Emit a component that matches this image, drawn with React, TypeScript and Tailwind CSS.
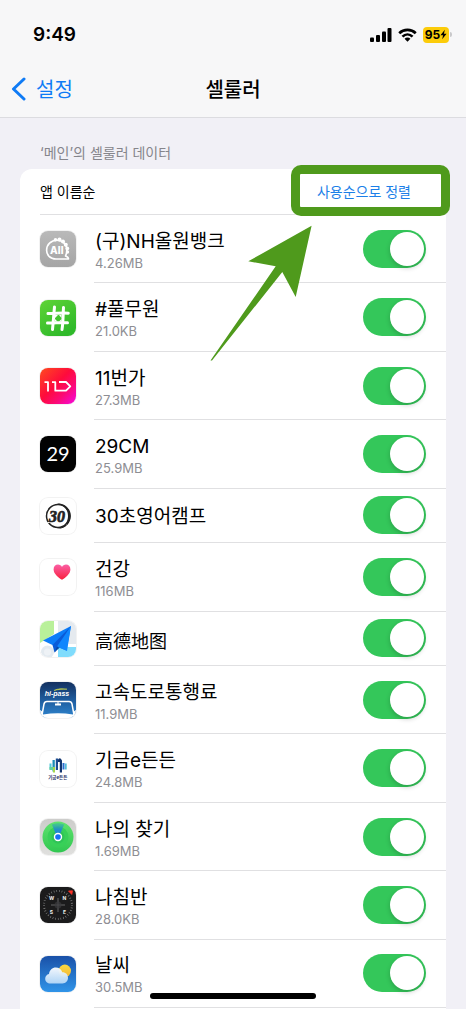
import type { ReactNode } from "react";
import { clsx } from "clsx";

type AppItem = {
  name: string;
  usage?: string;
  lang?: string;
  icon: ReactNode;
};

const AllOneIcon = () => (
  <svg viewBox="0 0 36 36" className="h-full w-full">
    <defs>
      <linearGradient id="allone" x1="0" y1="0" x2="0" y2="1">
        <stop offset="0" stopColor="#b9b9b9" />
        <stop offset="1" stopColor="#a5a5a5" />
      </linearGradient>
    </defs>
    <rect width="36" height="36" fill="url(#allone)" />
    <path
      d="M28.500 28H16C10 28 6.600 24 6.600 19.200C6.600 13.500 11 9.300 17 9.300C23 9.300 26.800 13.500 26.800 19C26.800 21.500 26.500 23.500 25.500 25C27 25.500 28.500 26.500 28.500 28Z"
      fill="none"
      stroke="#fff"
      strokeWidth="1.600"
      strokeLinejoin="round"
    />
    <g fill="#fff">
      <circle cx="15.500" cy="8.800" r="1.800" />
      <circle cx="19.500" cy="8.600" r="2" />
      <circle cx="23" cy="10.600" r="2" />
      <circle cx="25.800" cy="13.800" r="2" />
      <circle cx="27.300" cy="17.500" r="1.900" />
      <circle cx="27.500" cy="21" r="1.700" />
    </g>
    <text x="16.800" y="23" textAnchor="middle" fill="#fff" fontSize="10" fontWeight="800" fontFamily="Inter, sans-serif">
      All
    </text>
  </svg>
);

const HashIcon = () => (
  <svg viewBox="0 0 36 36" className="h-full w-full">
    <defs>
      <linearGradient id="hash" x1="0" y1="0" x2="0.6" y2="1">
        <stop offset="0" stopColor="#5fd436" />
        <stop offset="1" stopColor="#2fb92a" />
      </linearGradient>
    </defs>
    <rect width="36" height="36" fill="url(#hash)" />
    <g fill="none" stroke="#fff" strokeWidth="3" strokeLinecap="round" strokeLinejoin="round">
      <path d="M14.500 7C13.700 15 13.400 21 12.500 29.500" />
      <path d="M23.500 7.500C23 14 23.300 22 22 29.500" />
      <path d="M8 13.500C15 13.800 21 12.500 28.300 13.200" />
      <path d="M7.500 23C14 23.300 21 22.300 27.500 22.800" />
    </g>
    <path d="M15 15H18L15 18ZM21.500 15V18L19 15ZM15 21.500H17.500L15 19ZM21.500 21.500V19L19 21.500Z" fill="#fff" />
  </svg>
);

const ElevenIcon = () => (
  <svg viewBox="0 0 36 36" className="h-full w-full">
    <defs>
      <linearGradient id="eleven" x1="0" y1="0" x2="1" y2="1">
        <stop offset="0" stopColor="#ff4b1f" />
        <stop offset="0.45" stopColor="#fe0b3c" />
        <stop offset="0.7" stopColor="#fb0a76" />
        <stop offset="1" stopColor="#f509e0" />
      </linearGradient>
    </defs>
    <rect width="36" height="36" fill="url(#eleven)" />
    <path
      d="M4.500 14.200H8V23.500M12 14.200H15.300V22.700H26L30.300 18.400L26 14H19"
      fill="none"
      stroke="#fff"
      strokeWidth="1.800"
      strokeLinejoin="round"
    />
  </svg>
);

const TwentyNineIcon = () => (
  <svg viewBox="0 0 36 36" className="h-full w-full">
    <rect width="36" height="36" fill="#020202" />
    <text x="18" y="25" textAnchor="middle" fill="#fff" fontSize="20" fontFamily="Lato, Inter, sans-serif">
      29
    </text>
  </svg>
);

const ThirtyIcon = () => (
  <svg viewBox="0 0 36 36" className="h-full w-full">
    <circle cx="18" cy="18" r="11.500" fill="none" stroke="#222" strokeWidth="1.500" />
    <path d="M17 5.500C25 5 30.900 11 30.900 18C30.900 25 25 31.500 17 30.800C24 29.500 28 24.500 28 18C28 11.500 24 7 17 5.500Z" fill="#222" />
    <path d="M6 25.500L10 24M26.500 27L29 29" stroke="#fff" strokeWidth="1" fill="none" />
    <text
      x="17"
      y="23.500"
      textAnchor="middle"
      fill="#222"
      stroke="#222"
      strokeWidth="0.700"
      fontSize="16"
      fontStyle="italic"
      fontWeight="700"
      fontFamily="'Liberation Serif', serif"
    >
      30
    </text>
  </svg>
);

const HealthIcon = () => (
  <svg viewBox="0 0 36 36" className="h-full w-full">
    <defs>
      <linearGradient id="heart" x1="0" y1="0" x2="0" y2="1">
        <stop offset="0" stopColor="#fb5fa5" />
        <stop offset="1" stopColor="#f8203c" />
      </linearGradient>
    </defs>
    <path
      d="M22 20.800C18.500 18.500 13.600 14.800 13.600 10.400C13.600 7.500 15.500 5.600 18 5.600C19.800 5.600 21.200 6.500 22 7.900C22.800 6.500 24.300 5.600 26 5.600C28.500 5.600 30.400 7.500 30.400 10.400C30.400 14.800 25.500 18.500 22 20.800Z"
      fill="url(#heart)"
    />
  </svg>
);

const AmapIcon = () => (
  <svg viewBox="0 0 36 36" className="h-full w-full">
    <rect width="36" height="36" fill="#fff" />
    <path d="M0 0H14V13L0 22Z" fill="#b9f09a" />
    <path d="M18 0H36V23H18Z" fill="#e5eaef" />
    <path d="M18 26H36V36H18Z" fill="#80dcfc" />
    <circle cx="7.500" cy="31" r="6.500" fill="#e3eaf0" />
    <circle cx="7.500" cy="31" r="3.500" fill="#eef2f6" />
    <path d="M31 5L3 19.500L12.500 24L26.500 29.500Z" fill="#0c7df8" />
    <path d="M31 5L12.500 24L14.500 31.500L18.500 26Z" fill="#0a5bd8" />
    <path d="M31 5L17 25.500L27 30Z" fill="#0f86fd" />
    <path d="M14.500 31.500L17 25.500L19.500 26.700Z" fill="#0747a8" />
  </svg>
);

const HipassIcon = () => (
  <svg viewBox="0 0 36 36" className="h-full w-full">
    <defs>
      <linearGradient id="hipass" x1="0" y1="0" x2="0" y2="1">
        <stop offset="0" stopColor="#14305f" />
        <stop offset="0.5" stopColor="#1e5c9e" />
        <stop offset="1" stopColor="#2f86d0" />
      </linearGradient>
    </defs>
    <rect width="36" height="36" fill="url(#hipass)" />
    <path d="M14 8.500C18 6.300 23 6.500 27 7.200C22 7 18 7.500 14 8.500Z" fill="#d6e04a" stroke="#d6e04a" strokeWidth="0.500" />
    <text
      x="17"
      y="13.800"
      textAnchor="middle"
      fill="#fff"
      fontSize="7"
      fontStyle="italic"
      fontWeight="700"
      fontFamily="'Liberation Sans', sans-serif"
    >
      hi-pass
    </text>
    <path d="M7 19.500H29Q31.500 19.500 32 22L34 33V36H2V33L4 22Q4.500 19.500 7 19.500Z" fill="none" stroke="#fff" strokeWidth="1.500" />
    <path d="M3 32.500Q18 30 33 32.500L34 36H2Z" fill="#fff" />
    <path d="M0 28L3 30V36H0ZM36 28L33 30V36H36Z" fill="#fff" />
    <path d="M15 21.500H21V23.500H15Z" fill="#fff" />
    <path d="M17.500 19.500H18.500V22H17.500Z" fill="#fff" />
  </svg>
);

const FundIcon = () => (
  <svg viewBox="0 0 36 36" className="h-full w-full">
    <path d="M9.500 12.500H11.500V18.500H9.500Z" fill="#52c8da" />
    <path d="M12.500 9H14.800V20.500H12.500Z" fill="#1c8fb8" />
    <path d="M9.500 16H15V19H9.500Z" fill="#62cf9f" />
    <path d="M13 16H15V21.500H13Z" fill="#a3d84e" />
    <path d="M15.800 7.500H18V19H15.800Z" fill="#1b4d92" />
    <path d="M17.500 9.500Q19.700 5 22 9.500V21.500H19.800V11H18V9.500Z" fill="#12356f" />
    <path d="M22.500 12H24.500V18.500H22.500Z" fill="#2a6fd0" />
    <path d="M25 12.500H26.700V18.500H25Z" fill="#55bdd8" />
    <text
      x="17.800"
      y="27.600"
      textAnchor="middle"
      fill="#1c2f63"
      fontSize="4.500"
      fontWeight="700"
      fontFamily="'Noto Sans CJK KR', sans-serif"
    >
      기금e든든
    </text>
  </svg>
);

const FindIcon = () => (
  <svg viewBox="0 0 36 36" className="h-full w-full">
    <defs>
      <linearGradient id="findbg" x1="0" y1="0" x2="0" y2="1">
        <stop offset="0" stopColor="#cdcdcb" />
        <stop offset="1" stopColor="#e0e0de" />
      </linearGradient>
      <linearGradient id="findring" x1="0" y1="0" x2="0" y2="1">
        <stop offset="0" stopColor="#5fe36e" />
        <stop offset="1" stopColor="#30c751" />
      </linearGradient>
      <linearGradient id="findbeam" x1="0" y1="0" x2="0" y2="1">
        <stop offset="0" stopColor="#35b8a0" stopOpacity="0.500" />
        <stop offset="0.400" stopColor="#2390c8" />
        <stop offset="1" stopColor="#1c7be0" />
      </linearGradient>
    </defs>
    <rect width="36" height="36" fill="url(#findbg)" />
    <circle cx="18" cy="18" r="15.500" fill="url(#findring)" />
    <circle cx="18" cy="18" r="10.500" fill="#38d058" />
    <circle cx="18" cy="18" r="6.500" fill="#2fc457" />
    <path d="M18 20L11.800 5.500Q18 2.500 24.200 5.500Z" fill="url(#findbeam)" />
    <circle cx="18" cy="18" r="4.200" fill="#fff" />
    <circle cx="18" cy="18" r="2.800" fill="#1671f5" />
  </svg>
);

const CompassIcon = () => (
  <svg viewBox="0 0 36 36" className="h-full w-full">
    <rect width="36" height="36" fill="#1b1b1c" />
    <circle cx="18" cy="18" r="14" fill="none" stroke="#8b8b8b" strokeWidth="2" strokeDasharray="0.600 2.065" />
    <path d="M18 11V25M11 18H25" stroke="#77777a" strokeWidth="0.800" />
    <circle cx="18" cy="18" r="3.500" fill="#3b3b3d" opacity="0.700" />
    <path d="M28.500 4L32.500 3.800L31.800 7.500Z" fill="#fc3227" stroke="#fc3227" strokeWidth="0.800" />
    <g fill="#f1f1f1" fontSize="5" fontWeight="700" fontFamily="Inter, sans-serif" textAnchor="middle">
      <text x="11.500" y="13.300">W</text>
      <text x="24.500" y="13.300">N</text>
      <text x="11.500" y="27">S</text>
      <text x="24.500" y="27">E</text>
    </g>
  </svg>
);

const WeatherIcon = () => (
  <svg viewBox="0 0 36 36" className="h-full w-full">
    <defs>
      <linearGradient id="sky" x1="0" y1="0" x2="0" y2="1">
        <stop offset="0" stopColor="#1a51a8" />
        <stop offset="1" stopColor="#3094e8" />
      </linearGradient>
      <linearGradient id="sun" x1="0" y1="0" x2="0" y2="1">
        <stop offset="0" stopColor="#fbd83d" />
        <stop offset="1" stopColor="#f3b93c" />
      </linearGradient>
      <linearGradient id="cloud" x1="0" y1="0" x2="0" y2="1">
        <stop offset="0" stopColor="#fafcff" />
        <stop offset="1" stopColor="#b5d8f7" />
      </linearGradient>
    </defs>
    <rect width="36" height="36" fill="url(#sky)" />
    <circle cx="24.800" cy="14.800" r="6.200" fill="url(#sun)" />
    <path
      d="M10.500 27.500C7.500 27.500 5.200 25.400 5.200 22.700C5.200 20.300 6.800 18.500 9 18C9.500 14.200 12.300 11.600 15.800 11.600C18.900 11.600 21.300 13.300 22.300 16.200C25.800 16.200 28 18.600 28 21.800C28 25 25.700 27.500 22.500 27.500Z"
      fill="url(#cloud)"
      opacity="0.960"
    />
  </svg>
);

const apps: AppItem[] = [
  { name: "(구)NH올원뱅크", usage: "4.26MB", icon: <AllOneIcon /> },
  { name: "#풀무원", usage: "21.0KB", icon: <HashIcon /> },
  { name: "11번가", usage: "27.3MB", icon: <ElevenIcon /> },
  { name: "29CM", usage: "25.9MB", icon: <TwentyNineIcon /> },
  { name: "30초영어캠프", icon: <ThirtyIcon /> },
  { name: "건강", usage: "116MB", icon: <HealthIcon /> },
  { name: "高德地图", lang: "zh", icon: <AmapIcon /> },
  { name: "고속도로통행료", usage: "11.9MB", icon: <HipassIcon /> },
  { name: "기금e든든", usage: "24.8MB", icon: <FundIcon /> },
  { name: "나의 찾기", usage: "1.69MB", icon: <FindIcon /> },
  { name: "나침반", usage: "28.0KB", icon: <CompassIcon /> },
  { name: "날씨", usage: "30.5MB", icon: <WeatherIcon /> },
];

function StatusBar() {
  return (
    <div className="flex h-[61px] items-center justify-between pt-2 pr-[14px] pl-[33px]">
      <span className="text-[19px] leading-6 font-semibold">9:49</span>
      <div className="flex items-center gap-[6px]">
        <svg viewBox="0 0 22 14" className="h-[14px] w-[22px]">
          <rect x="0" y="9.500" width="4" height="4.500" rx="1" />
          <rect x="6" y="7" width="4" height="7" rx="1" />
          <rect x="12" y="3.500" width="4" height="10.500" rx="1" />
          <rect x="17.500" y="0" width="4" height="14" rx="1" />
        </svg>
        <svg viewBox="0 0 20 14" className="h-[14px] w-[19px]">
          <g fill="none" stroke="#000" strokeWidth="2.800">
            <path d="M1.300 5.200C6 0.500 14 0.500 18.700 5.200" />
            <path d="M4.700 8.700C7.800 5.700 12.200 5.700 15.300 8.700" />
          </g>
          <path d="M10 14L6.900 10.900C8.600 9.300 11.400 9.300 13.100 10.900Z" />
        </svg>
        <div className="flex items-center gap-px">
          <span className="flex h-4 w-[26px] items-center justify-center rounded-[4px] bg-[#fccc0a] text-[12px] leading-4 font-bold">
            95
            <svg viewBox="0 0 8 11" className="h-[11px] w-[7px]">
              <path d="M5.500 0L0.500 6.300H3.500L2.500 11L7.500 4.700H4.500Z" />
            </svg>
          </span>
          <span className="h-[5px] w-[2px] rounded-r-full bg-[#c9c9cb]" />
        </div>
      </div>
    </div>
  );
}

function AppRow({ app }: { app: AppItem }) {
  return (
    <li className={clsx("flex shrink-0 grow items-center pl-5", app.usage ? "basis-[68px]" : "basis-[54px]")}>
      <div className="h-9 w-9 shrink-0 overflow-hidden rounded-[8px] ring-1 ring-black/5">{app.icon}</div>
      <div className="ml-[18px] flex flex-1 items-center justify-between self-stretch border-b border-[#e0e0e2] pr-5">
        <div className={clsx("pl-px", !app.usage && "pt-1")}>
          <div
            lang={app.lang}
            className={clsx(
              app.lang === "zh"
                ? "font-['Noto_Sans_CJK_SC',sans-serif] text-[18px] leading-6"
                : "text-[19px] leading-7"
            )}
          >
            {app.name}
          </div>
          {app.usage && <div className="text-[13px] leading-[14px] text-[#8e8e93]">{app.usage}</div>}
        </div>
        <input
          type="checkbox"
          role="switch"
          defaultChecked
          aria-label={app.name}
          className="h-[38px] w-[63px] shrink-0 cursor-pointer appearance-none rounded-full bg-[#e9e9eb] p-[2px] transition-colors before:block before:h-[34px] before:w-[34px] before:rounded-full before:bg-white before:shadow-[0_2px_5px_rgba(0,0,0,0.2)] before:transition-transform checked:bg-[#34c75a] checked:before:translate-x-[25px]"
        />
      </div>
    </li>
  );
}

export default function App() {
  return (
    <div className="relative flex min-h-screen flex-col bg-[#f1f0f6] font-['Inter','Noto_Sans_CJK_KR',sans-serif] text-black">
      <header className="border-b border-[#dcdce0] bg-[#f7f7f8]">
        <StatusBar />
        <nav className="grid h-14 grid-cols-3 items-center px-[11px]">
          <a href="#settings" className="flex items-center gap-[10px] text-[20px] leading-7 text-[#0f7bf5]">
            <svg viewBox="0 0 15 24" className="h-6 w-[15px]">
              <path
                d="M13 2L2.500 12L13 22"
                fill="none"
                stroke="currentColor"
                strokeWidth="3"
                strokeLinecap="round"
                strokeLinejoin="round"
              />
            </svg>
            <span className="pt-[2px]">설정</span>
          </a>
          <h1 className="pt-[2px] text-center text-[20px] leading-7 font-medium">셀룰러</h1>
        </nav>
      </header>

      <main className="flex flex-1 flex-col px-5 pt-[25px]">
        <h2 className="mb-[6px] pl-5 text-[14px] leading-5 text-[#85858b]">‘메인’의 셀룰러 데이터</h2>
        <section className="flex flex-1 flex-col rounded-t-[12px] bg-white pb-px">
          <div className="relative ml-5 flex h-[46px] items-center justify-between border-b border-[#e0e0e2] pr-[35px]">
            <span className="text-[14px] leading-5">앱 이름순</span>
            <button type="button" className="text-[14px] leading-5 text-[#1b7fe8]">
              사용순으로 정렬
            </button>
            {/* highlight + arrow pointing at the sort button */}
            <div className="pointer-events-none absolute -top-1 -right-1 h-[51px] w-[159px] rounded-[10px] bg-transparent ring-[9px] ring-[#4f9a1c] ring-inset" />
            <svg
              viewBox="0 0 104 136"
              className="pointer-events-none absolute top-14 right-[133px] h-[136px] w-[104px]"
              fill="#4f9a1c"
            >
              <path d="M102.600 0.700L39.300 36.300L66.700 41.300L1.500 135.500L3 135.500L73.300 47L86.700 72Z" />
            </svg>
          </div>
          <ul className="flex flex-1 flex-col">
            {apps.map((app) => (
              <AppRow key={app.name} app={app} />
            ))}
          </ul>
        </section>
      </main>

      <div className="absolute bottom-[10px] left-1/2 h-[6px] w-[166px] -translate-x-1/2 rounded-full bg-black" />
    </div>
  );
}
